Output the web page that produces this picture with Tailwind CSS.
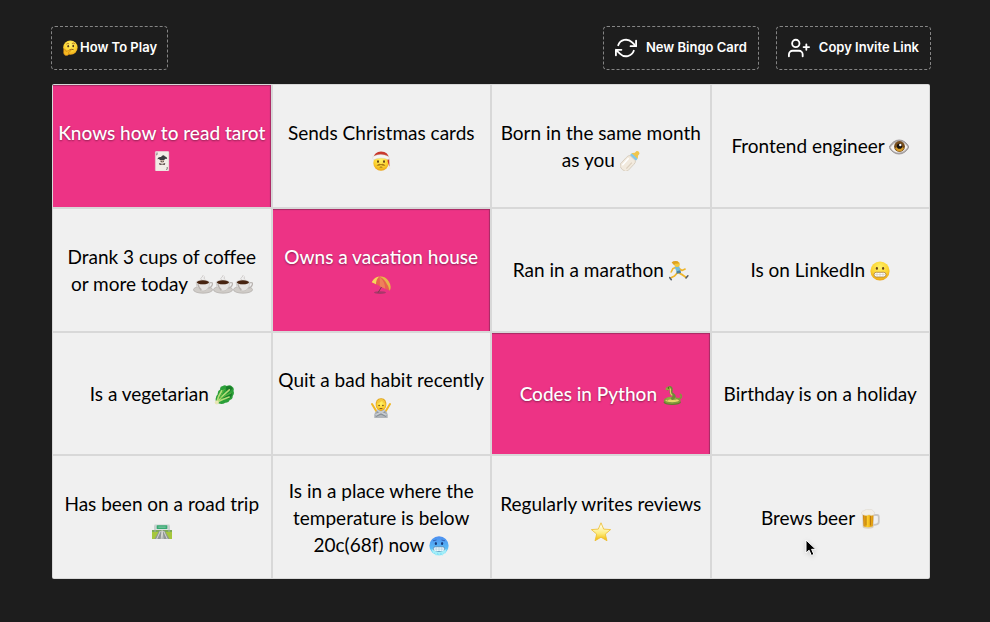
<!DOCTYPE html>
<html lang="en">
<head>
<meta charset="utf-8">
<meta name="viewport" content="width=device-width, initial-scale=1">
<title>Bingo</title>
<script src="https://cdn.jsdelivr.net/npm/@tailwindcss/browser@4"></script>
</head>
<body class="min-h-screen bg-[#1d1d1d] font-['Inter','Liberation_Sans',sans-serif]">
<!-- Shared emoji drawings -->
<svg class="absolute size-0" aria-hidden="true">
  <defs>
    <radialGradient id="gold" cx=".5" cy=".3" r=".75"><stop offset="0" stop-color="#fff36a"/><stop offset=".6" stop-color="#fcd12e"/><stop offset="1" stop-color="#e79a12"/></radialGradient>
    <linearGradient id="starfill" x1="0" y1="0" x2="0" y2="1"><stop offset=".2" stop-color="#fffbd8"/><stop offset=".6" stop-color="#fdeb78"/><stop offset="1" stop-color="#f0b400"/></linearGradient>
    <linearGradient id="ice" x1="0" y1="0" x2="0" y2="1"><stop offset="0" stop-color="#4b8df0"/><stop offset=".6" stop-color="#59b9f5"/><stop offset="1" stop-color="#8eeaf8"/></linearGradient>
    <linearGradient id="beerfill" x1="0" y1="0" x2="1" y2="0"><stop offset="0" stop-color="#c97a05"/><stop offset=".4" stop-color="#ffd12b"/><stop offset="1" stop-color="#dc9108"/></linearGradient>
  </defs>
  <symbol id="thinking" viewBox="0 0 20 20">
    <circle cx="10.5" cy="9.5" r="9" fill="url(#gold)"/>
    <path d="M5.5 5.2Q7.5 3.6 9 5M12.3 4.6Q14 3 16 4.6" fill="none" stroke="#a8691a" stroke-width="1.1"/>
    <ellipse cx="7.8" cy="7.7" rx="1.1" ry="1.5" fill="#55371a"/><ellipse cx="14" cy="7.5" rx="1.1" ry="1.5" fill="#55371a"/>
    <path d="M9.3 12.4Q12 11 14.5 12.1" fill="none" stroke="#7a4b17" stroke-width="1.1"/>
    <path d="M2.2 12.5Q3.2 10.3 4.6 12.5L5 14.3L10.6 12.3Q12 12.5 11 13.7L8.3 15.2Q9.6 18.9 6 19.5Q2.4 19.6 2 16Z" fill="#f7b81f" stroke="#c87c14" stroke-width=".7"/>
  </symbol>
  <symbol id="joker" viewBox="0 0 20 20">
    <rect x="3.3" y=".3" width="13.6" height="19.8" rx="1" fill="#f2ede6" stroke="#d6cdc7" stroke-width=".4"/>
    <path d="M5 1.5V3.3Q5 4.2 4.2 3.9M15.2 16V18Q15.2 18.8 14.4 18.5" fill="none" stroke="#444" stroke-width=".7"/>
    <path d="M5.3 8.3Q6.5 5.4 9 6.1Q11 2.6 13 5.4Q15.1 5.2 15.2 8Q13 7.1 12.3 9H7.9Q7.2 7.2 5.3 8.3Z" fill="#3c3c40"/>
    <path d="M8 9H12.3Q12.3 12 10.2 12.4Q8 12 8 9Z" fill="#cbb8a8"/><path d="M7 12L10.2 13.1 13.3 12 12.7 14.1 10.2 13.5 7.7 14.1Z" fill="#4e3a3a"/><circle cx="9.2" cy="10.2" r=".5"/><circle cx="11.2" cy="10.2" r=".5"/>
  </symbol>
  <symbol id="santa" viewBox="0 0 20 20">
    <ellipse cx="10" cy="12" rx="7.7" ry="7.7" fill="url(#gold)"/>
    <path d="M2.5 6.5Q3.5 .8 10 .5Q17.7.6 18.2 8.4L18.5 16L16.7 10.7 16.5 6Z" fill="#c9392c"/>
    <path d="M2 5.4Q9.9 1.5 17.7 5.6Q19 7.2 17.5 8.7Q10 5.4 2.7 8.7Q1 7.3 2 5.4Z" fill="#f6f5f2" stroke="#cfccc6" stroke-width=".4"/>
    <circle cx="18.2" cy="17.2" r="1.4" fill="#eeece8"/>
    <ellipse cx="7" cy="10.6" rx="1" ry="1.3" fill="#624016"/><ellipse cx="13" cy="10.6" rx="1" ry="1.3" fill="#624016"/>
    <path d="M5.5 14.4Q8 12 10 13.2Q12 12 14.5 14.4Q12 15.1 10 14.1Q8 15.1 5.5 14.4Z" fill="#aa7812"/><path d="M8.7 16.3Q10 15.7 11.3 16.3" fill="none" stroke="#84550e" stroke-width=".8"/>
  </symbol>
  <symbol id="bottle" viewBox="0 0 20 20">
    <g transform="rotate(43 10 10)">
      <path d="M8-1.8Q10-4 12-1.8L12.2.7 13.8 2.6V4H6.2V2.6L7.8.7Z" fill="#efc64c"/>
      <rect x="5.9" y="3.2" width="8.2" height="2.8" rx=".8" fill="#86c9e8"/>
      <path d="M6.3 6H13.7Q15.4 7.4 15.1 10V18.5Q15 21.5 10 21.5T4.9 18.5V10Q4.6 7.4 6.3 6Z" fill="#f2eade" stroke="#cfc4b4" stroke-width=".7"/>
      <path d="M7.2 9V18.3" stroke="#fff" stroke-width="1.5"/><path d="M12.5 10V18" stroke="#dccfbd" stroke-width="1.2"/>
    </g>
  </symbol>
  <symbol id="eye" viewBox="0 0 20 20">
    <path d="M0 10.3Q4.2 3 10.2 3T20 10Q16 17 10 17T0 10.3Z" fill="#b5b0b0" stroke="#8b8586" stroke-width=".8"/>
    <path d="M1.5 10.5Q5 5.2 10.2 5T18.6 10Q15.5 15.3 10 15.5T1.5 10.5Z" fill="#f5f3f1"/>
    <circle cx="10.5" cy="9.5" r="5.4" fill="#754c1c"/><path d="M6 11.3Q10.5 7.6 15 11.3Q13.2 14.5 10.5 14.5T6 11.3Z" fill="#d69b28"/><circle cx="10.5" cy="9.2" r="2.6" fill="#16100d"/><circle cx="11.3" cy="8" r="1.2" fill="#fff"/>
  </symbol>
  <symbol id="coffee" viewBox="0 0 20 20">
    <path d="M8.6 5Q6.8 3.6 8.9 2.1T9.6 0M12 4.5Q10.5 3.3 11.4 1.5" fill="none" stroke="#d0cccb" stroke-width="1"/>
    <ellipse cx="10" cy="14.7" rx="9.6" ry="3.5" fill="#d0ccc8" stroke="#aaa5a1" stroke-width=".6"/>
    <path d="M15.7 8Q20.5 6.6 19.2 10T14.3 13" fill="none" stroke="#bab5b2" stroke-width="1.3"/>
    <path d="M3 7.3H16.8Q17 12.3 13 15.3Q10 16.8 7 15.3Q3 12.3 3 7.3Z" fill="#e6e3e1" stroke="#b9b4b0" stroke-width=".5"/><path d="M5 9Q5.5 13 8.4 14.9" fill="none" stroke="#b7b1ad" stroke-width="1.4"/>
    <ellipse cx="9.9" cy="7.2" rx="6.9" ry="2.5" fill="#d4d0cd"/><ellipse cx="9.9" cy="7.3" rx="6.1" ry="2" fill="#47230f"/>
  </symbol>
  <symbol id="parasol" viewBox="0 0 20 20">
    <ellipse cx="9" cy="17.6" rx="6" ry="1.4" fill="#a9386a"/><path d="M13 8L7 17.7" stroke="#76404b" stroke-width="1"/>
    <path d="M.7 7.2Q3.7 1.6 8.4 1.5Q14.1 1 17.5 5.9Q20.8 10.8 18.7 15.8Z" fill="#e8604f"/>
    <path d="M.7 7.2Q3.7 1.6 8.4 1.5Q4.9 4.2 5 9.3Z" fill="#f6d65b"/><path d="M8.4 1.5Q9.2 5.5 8.8 11.2L14.3 13.8Q13.7 5.9 8.4 1.5Z" fill="#ef8059"/><path d="M8.4 1.5Q15.5 4.3 18.7 15.8 21 10.9 17.5 5.9 14.1 1 8.4 1.5Z" fill="#e6b64a"/>
  </symbol>
  <symbol id="runner" viewBox="0 0 20 20">
    <g fill="none" stroke-linecap="round" stroke-linejoin="round"><path d="M8 6L4 7.4 2.2 11M9.4 7L13 9.5 16.1 8" stroke="#efb62c" stroke-width="1.6"/><path d="M8.2 12L5.5 15 2 16.7M10 12L13.6 13.9 17.2 16.4" stroke="#efb62c" stroke-width="1.8"/><path d="M.6 16.5L2.3 18.7M18.9 14.8L17 17" stroke="#555d68" stroke-width="1.5"/></g>
    <path d="M5.5 5.4L10.2 5.1 11.3 10.2 8 12Z" fill="#72bddd"/><path d="M7.6 10.3L11.5 9.3 12 12 7.5 12.8Z" fill="#4b7d9e"/><circle cx="8.1" cy="3.2" r="2.7" fill="#f6c938"/><path d="M2.6 1.5Q4.3-.5 8.6.2L10.2 2.6 6 2.7 5.4 4.4Z" fill="#dfa320"/>
  </symbol>
  <symbol id="grimace" viewBox="0 0 20 20">
    <circle cx="10" cy="10" r="9.6" fill="url(#gold)"/><ellipse cx="6.9" cy="7.4" rx="1.1" ry="1.4" fill="#65401b"/><ellipse cx="13.1" cy="7.4" rx="1.1" ry="1.4" fill="#65401b"/>
    <rect x="4" y="11.3" width="12" height="4.7" rx="2.3" fill="#fff" stroke="#a77b39" stroke-width=".8"/><path d="M4.3 13.6H15.7M7 11.5V15.8M10 11.3V16M13 11.5V15.8" stroke="#c4b9a2" stroke-width=".5"/>
  </symbol>
  <symbol id="greens" viewBox="0 0 20 20">
    <path d="M2.2 17.5Q.5 12 3.7 9.3Q3.4 5.5 6.2 4.4Q5.6 1.4 8.8 1Q10.6-.5 12.7.9Q16-.6 18 1.4Q20.6 2.7 19.5 6Q20.7 8.9 18.7 11Q19 14.2 15.8 15Q14.7 18.1 11.3 17.7Q7.6 20.2 2.2 17.5Z" fill="#2ba039"/>
    <path d="M12 1.8Q17-.2 18.7 3.6L12.5 9.2M18 8Q18.4 12.6 14 14.2L8.9 13.1" fill="#1a7d29"/>
    <g fill="none" stroke="#b6dc78" stroke-linecap="round"><path d="M2.8 17.4Q4.3 11 7.7 5.8" stroke-width="1.7"/><path d="M2.8 17.4Q8.2 10.7 15.3 4.8" stroke-width="1.6"/><path d="M2.8 17.4Q8.2 14.3 15.2 12" stroke-width="1.5"/><path d="M5.8 13.5Q8 8 10.2 4.3M7.5 13Q12 9.8 17 8" stroke="#63b83d" stroke-width=".9"/></g><circle cx="2.8" cy="17.6" r="2" fill="#e7e5b5"/>
  </symbol>
  <symbol id="refuse" viewBox="0 0 20 20">
    <path d="M1 6L5.2 13M19 6L14.8 13" stroke="#f0b724" stroke-width="2" stroke-linecap="round"/><path d="M3.3 20Q2.6 13 7 12.4H13Q17.4 13 16.7 20Z" fill="#afb4b9"/>
    <path d="M4.8 8Q4 .5 10 .3T15.2 8L14.2 10H5.8Z" fill="#dfa119"/><ellipse cx="10" cy="7.6" rx="4.8" ry="5.4" fill="url(#gold)"/><path d="M5.5 5.5Q9.2 5 11 2.8Q12.1 5.2 14.5 5.5 13.6.8 10 1 6 1.1 5.5 5.5Z" fill="#f5c93c"/>
    <circle cx="8.1" cy="7.5" r=".8" fill="#67451b"/><circle cx="11.9" cy="7.5" r=".8" fill="#67451b"/><path d="M8.6 10.5H11.4" stroke="#945e17"/>
    <path d="M4.4 17.6L14 12.8M15.6 17.6L6 12.8" stroke="#858d94" stroke-width="3"/><path d="M4.4 17.1L14 12.3M15.6 17.1L6 12.3" stroke="#c8ccd0" stroke-width="1.8"/>
  </symbol>
  <symbol id="snake" viewBox="0 0 20 20">
    <ellipse cx="10.2" cy="17.3" rx="8.7" ry="2.6" fill="#63792e"/><path d="M16.7 14Q21 12.4 18.5 9.5" fill="none" stroke="#81973c" stroke-width="1.7" stroke-linecap="round"/>
    <ellipse cx="10.2" cy="15.6" rx="7.6" ry="2.5" fill="#e5d66c" stroke="#819c3c" stroke-width="1.6"/><path d="M4.4 15Q7 11.7 13.8 14" fill="none" stroke="#91ad42" stroke-width="2.4"/>
    <path d="M5.5 3.8Q9.7.8 9.3 5.3Q8 8.2 11 9.5Q13.7 11 10.5 13.5" fill="none" stroke="#6f8938" stroke-width="3" stroke-linecap="round"/><path d="M6.7 3.4Q9 3 8.4 6.1Q7.9 8.6 10.3 10.4" fill="none" stroke="#ddcf64" stroke-width="1.2"/>
    <path d="M3.3 3.4L6.4 1.5 8.7 2.7 7.5 5 4 4.9Z" fill="#8eaa3b"/><circle cx="6.4" cy="2.9" r=".6" fill="#332a17"/>
  </symbol>
  <symbol id="road" viewBox="0 0 20 20">
    <path d="M0 8H20V17H0Z" fill="#a5c73c"/><path d="M0 8H20V10H0Z" fill="#7eaa54"/><path d="M7.4 8.6H12.6L17.5 17H2.5Z" fill="#8f9595"/><path d="M10 8.5L9.2 17M10.2 8.5L11 17M8.4 9L4.7 17M11.6 9L15.3 17" stroke="#e8e9e1" stroke-width=".8"/>
    <path d="M3 3.5V10M17 3.5V10" stroke="#a4adac" stroke-width="1"/><rect x="2.5" y="2.5" width="15" height="5" fill="#c9d3d0"/><rect x="4.7" y="3.3" width="10.6" height="3.6" rx=".4" fill="#38a973"/><path d="M6.3 5.1H13.7" stroke="#b9e6cf" stroke-width=".6"/>
  </symbol>
  <symbol id="cold" viewBox="0 0 20 20">
    <circle cx="10" cy="9.8" r="9.6" fill="url(#ice)"/><ellipse cx="6.9" cy="7.5" rx="1.1" ry="1.5" fill="#193a78"/><ellipse cx="13.1" cy="7.5" rx="1.1" ry="1.5" fill="#193a78"/><path d="M4 4.8L7.5 4M16 4.8L12.5 4" stroke="#315eb0" stroke-width=".9"/>
    <rect x="4.4" y="10.8" width="11.2" height="4.7" rx="1.8" fill="#f1fbff" stroke="#4379a8" stroke-width=".7"/><path d="M4.6 13.1H15.4M7.2 11V15.2M10 11V15.2M12.8 11V15.2" stroke="#94bed3" stroke-width=".5"/>
    <path d="M2.6 13L4.3 18 5.8 16.4 7 20 8.6 16.6 10.3 19 12 16.6 13.6 20 15 16.4 16.3 17.8 17.4 13Q10 19 2.6 13Z" fill="#a5eff8"/>
  </symbol>
  <symbol id="star" viewBox="0 0 20 20"><path d="M10 .8L12.7 7.1 19.6 7.6 14.3 12.1 16 18.8 10 15.2 4 18.8 5.7 12.1.4 7.6 7.3 7.1Z" fill="url(#starfill)" stroke="#edbc2c" stroke-width=".8" stroke-linejoin="round"/></symbol>
  <symbol id="beer" viewBox="0 0 20 20">
    <path d="M13 6H17Q18.8 6 18.8 8V12.7Q18.8 15.2 16 15.6L13 16" fill="none" stroke="#c9c6c3" stroke-width="1.8"/><path d="M2 3H14.3L13.6 18Q13.3 19.7 8.1 19.7T2.7 18Z" fill="#d9cfbd"/><path d="M2.9 5.2H13.4L12.8 17.3Q8 19.3 3.5 17.3Z" fill="url(#beerfill)"/>
    <path d="M6 7V16.5M10.4 7V16.5" stroke="#a7660b" stroke-width=".8"/><path d="M1.9 5.4Q.5 2.4 3.8 1.8Q6-.5 8.9.6Q12.4-.2 13.4 2.1Q15.5 3.3 14 5.8Q11.6 7.2 9 5.8Q5.8 7.4 1.9 5.4Z" fill="#f3efe8" stroke="#d3ccc3" stroke-width=".4"/>
  </symbol>
</svg>

<header class="flex flex-wrap items-center justify-between gap-4 pt-[26px] pr-[59px] pl-[51px]">
  <button type="button" class="flex h-11 items-center gap-[2px] rounded-[4px] border border-dashed border-[#858585] px-[10px] text-[13px] font-semibold text-white">
    <svg class="size-4" aria-hidden="true"><use href="#thinking"/></svg>How To Play
  </button>
  <div class="flex gap-[17px]">
    <button type="button" class="flex h-11 items-center gap-[9px] rounded-[4px] border border-dashed border-[#858585] px-[11px] text-[13px] font-semibold text-white">
      <svg class="size-[22px]" viewBox="0 0 24 24" fill="none" stroke="currentColor" stroke-width="2" stroke-linecap="round" stroke-linejoin="round" aria-hidden="true"><path d="M23 4v6h-6M1 20v-6h6M3.51 9a9 9 0 0 1 14.85-3.36L23 10M1 14l4.64 4.36A9 9 0 0 0 20.49 15"/></svg>New Bingo Card
    </button>
    <button type="button" class="flex h-11 items-center gap-[9px] rounded-[4px] border border-dashed border-[#858585] px-[11px] text-[13px] font-semibold text-white">
      <svg class="size-[22px]" viewBox="0 0 24 24" fill="none" stroke="currentColor" stroke-width="2" stroke-linecap="round" stroke-linejoin="round" aria-hidden="true"><path d="M16 21v-2a4 4 0 0 0-4-4H5a4 4 0 0 0-4 4v2M20 8v6M23 11h-6"/><circle cx="8.5" cy="7" r="4"/></svg>Copy Invite Link
    </button>
  </div>
</header>

<main class="pt-[14px] pr-[60px] pb-[43px] pl-[52px]">
  <div class="grid min-h-[495px] auto-rows-fr grid-cols-4 gap-[2px] rounded-[2px] bg-[#d8d8d8] p-px font-['Lato','Liberation_Sans',sans-serif] text-[19px] leading-[27px] text-black">
    <button type="button" aria-pressed="true" class="bg-[#ed3385] font-medium text-white shadow-[inset_-1px_1px_1px_#a62b63] [text-shadow:0_1px_2px_#00000066]">Knows how to read tarot<br><svg class="inline-block size-5 align-[-4px]" aria-hidden="true"><use href="#joker"/></svg></button>
    <button type="button" aria-pressed="false" class="bg-[#f0f0f0]">Sends Christmas cards<br><svg class="inline-block size-5 align-[-4px]" aria-hidden="true"><use href="#santa"/></svg></button>
    <button type="button" aria-pressed="false" class="bg-[#f0f0f0]">Born in the same month<br>as you <svg class="inline-block size-5 align-[-4px]" aria-hidden="true"><use href="#bottle"/></svg></button>
    <button type="button" aria-pressed="false" class="bg-[#f0f0f0]">Frontend engineer <svg class="inline-block size-5 align-[-4px]" aria-hidden="true"><use href="#eye"/></svg></button>

    <button type="button" aria-pressed="false" class="bg-[#f0f0f0]">Drank 3 cups of coffee<br>or more today <svg class="inline-block size-5 align-[-4px]" aria-hidden="true"><use href="#coffee"/></svg><svg class="inline-block size-5 align-[-4px]" aria-hidden="true"><use href="#coffee"/></svg><svg class="inline-block size-5 align-[-4px]" aria-hidden="true"><use href="#coffee"/></svg></button>
    <button type="button" aria-pressed="true" class="bg-[#ed3385] font-medium text-white shadow-[inset_-1px_1px_1px_#a62b63] [text-shadow:0_1px_2px_#00000066]">Owns a vacation house<br><svg class="inline-block size-5 align-[-4px]" aria-hidden="true"><use href="#parasol"/></svg></button>
    <button type="button" aria-pressed="false" class="bg-[#f0f0f0]">Ran in a marathon <svg class="inline-block size-5 align-[-4px]" aria-hidden="true"><use href="#runner"/></svg></button>
    <button type="button" aria-pressed="false" class="bg-[#f0f0f0]">Is on LinkedIn <svg class="inline-block size-5 align-[-4px]" aria-hidden="true"><use href="#grimace"/></svg></button>

    <button type="button" aria-pressed="false" class="bg-[#f0f0f0]">Is a vegetarian <svg class="inline-block size-5 align-[-4px]" aria-hidden="true"><use href="#greens"/></svg></button>
    <button type="button" aria-pressed="false" class="bg-[#f0f0f0]">Quit a bad habit recently<br><svg class="inline-block size-5 align-[-4px]" aria-hidden="true"><use href="#refuse"/></svg></button>
    <button type="button" aria-pressed="true" class="bg-[#ed3385] font-medium text-white shadow-[inset_-1px_1px_1px_#a62b63] [text-shadow:0_1px_2px_#00000066]">Codes in Python <svg class="inline-block size-5 align-[-4px]" aria-hidden="true"><use href="#snake"/></svg></button>
    <button type="button" aria-pressed="false" class="bg-[#f0f0f0]">Birthday is on a holiday</button>

    <button type="button" aria-pressed="false" class="bg-[#f0f0f0]">Has been on a road trip<br><svg class="inline-block size-5 align-[-4px]" aria-hidden="true"><use href="#road"/></svg></button>
    <button type="button" aria-pressed="false" class="bg-[#f0f0f0]">Is in a place where the<br>temperature is below<br>20c(68f) now <svg class="inline-block size-5 align-[-4px]" aria-hidden="true"><use href="#cold"/></svg></button>
    <button type="button" aria-pressed="false" class="bg-[#f0f0f0]">Regularly writes reviews<br><svg class="inline-block size-5 align-[-4px]" aria-hidden="true"><use href="#star"/></svg></button>
    <button type="button" aria-pressed="false" class="relative bg-[#f0f0f0]">Brews beer <svg class="inline-block size-5 align-[-4px]" aria-hidden="true"><use href="#beer"/></svg>
      <svg class="pointer-events-none absolute top-[83px] left-[93px] h-[18px] w-3 overflow-visible drop-shadow-sm" viewBox="0 0 12 18" aria-hidden="true"><path d="M1 1V14L4.1 11.2 6.4 16.5 8.9 15.4 6.6 10.3H10.8Z" fill="#000" stroke="#fff" stroke-width="1"/></svg>
    </button>
  </div>
</main>
</body>
</html>
